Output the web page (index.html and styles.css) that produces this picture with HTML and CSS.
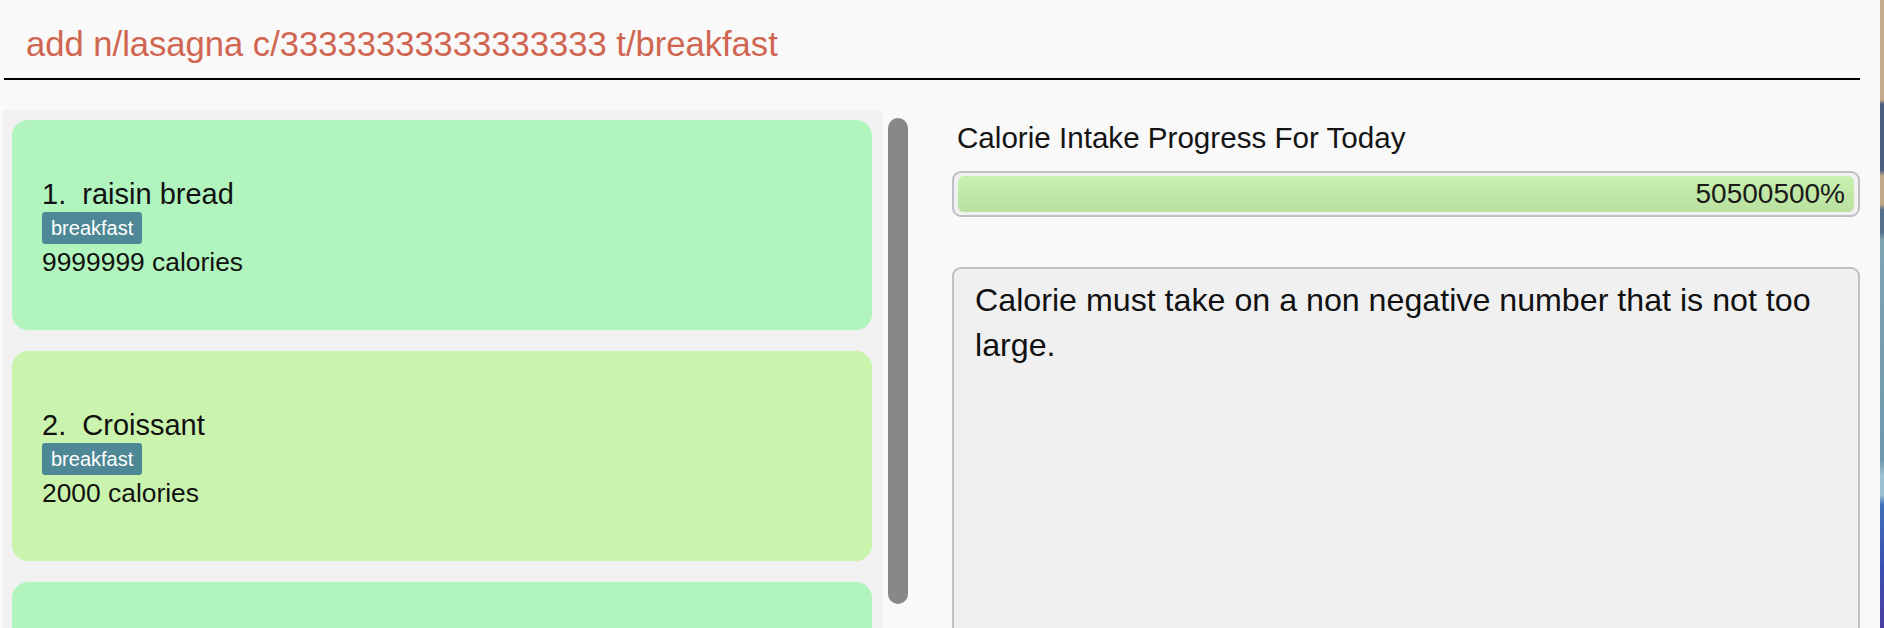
FILE: index.html
```html
<!DOCTYPE html>
<html lang="en">
<head>
<meta charset="utf-8">
<title>Calorie Tracker</title>
<link rel="stylesheet" href="styles.css">
</head>
<body>
<div class="app">
  <div class="window">
    <div class="command">add n/lasagna c/33333333333333333 t/breakfast</div>
    <div class="main">
      <div class="list-panel">
        <div class="card card-a">
          <div class="card-title">1.&nbsp; raisin bread</div>
          <span class="tag">breakfast</span>
          <div class="card-detail">9999999 calories</div>
        </div>
        <div class="card card-b">
          <div class="card-title">2.&nbsp; Croissant</div>
          <span class="tag">breakfast</span>
          <div class="card-detail">2000 calories</div>
        </div>
        <div class="card card-a"></div>
      </div>
      <div class="scrollbar"></div>
      <div class="side">
        <div class="side-title">Calorie Intake Progress For Today</div>
        <div class="progress">
          <div class="progress-bar">50500500%</div>
        </div>
        <div class="result">Calorie must take on a non negative number that is not too large.</div>
      </div>
    </div>
  </div>
  <div class="wallpaper"></div>
</div>
</body>
</html>
```
FILE: styles.css
```css
html, body {
  margin: 0;
  padding: 0;
}
body {
  width: 1884px;
  height: 628px;
  overflow: hidden;
  background: #f9f9f9;
  font-family: "Liberation Sans", Arial, sans-serif;
  color: #111;
}
.app {
  display: flex;
  height: 628px;
  overflow: hidden;
}
.window {
  width: 1880px;
  box-sizing: border-box;
  padding: 0 20px 0 3px;
  display: flex;
  flex-direction: column;
  background: #f9f9f9;
  overflow: hidden;
}
.command {
  flex: none;
  box-sizing: border-box;
  height: 80px;
  margin-left: 1px;
  padding: 24px 0 0 22px;
  border-bottom: 2px solid #000;
  font-size: 34.6px;
  line-height: 40px;
  color: #d06651;
  white-space: nowrap;
}
.main {
  flex: none;
  display: flex;
  align-items: flex-start;
  margin-top: 30px;
}
.list-panel {
  flex: none;
  width: 879px;
  height: 560px;
  box-sizing: border-box;
  padding: 10px 10px 0 9px;
  background: #f1f1f1;
  display: flex;
  flex-direction: column;
  gap: 21px;
  overflow: hidden;
}
.card {
  flex: none;
  height: 210px;
  box-sizing: border-box;
  border-radius: 16px;
  padding: 57px 0 0 30px;
  display: flex;
  flex-direction: column;
  align-items: flex-start;
}
.card-a { background: #b1f4bd; }
.card-b { background: #caf4ad; }
.card-title {
  font-size: 29px;
  line-height: 34px;
  white-space: pre;
}
.tag {
  margin-top: 1px;
  padding: 4px 9px;
  font-size: 20px;
  line-height: 24px;
  color: #fff;
  background: #4e8795;
  border-radius: 3px;
}
.card-detail {
  margin-top: 3px;
  font-size: 26.4px;
  line-height: 30px;
}
.scrollbar {
  flex: none;
  width: 20px;
  height: 486px;
  margin: 8px 0 0 6px;
  border-radius: 10px;
  background: #888888;
}
.side {
  flex: 1;
  margin-left: 44px;
  padding-top: 11px;
  display: flex;
  flex-direction: column;
}
.side-title {
  font-size: 29.6px;
  line-height: 34px;
  padding-left: 5px;
  color: #141414;
}
.progress {
  margin-top: 16px;
  height: 46px;
  box-sizing: border-box;
  border: 2px solid #bfbfc6;
  border-radius: 9px;
  background: #f1f1f1;
  padding: 3px 4px;
}
.progress-bar {
  height: 36px;
  box-sizing: border-box;
  border-radius: 6px;
  background: linear-gradient(#c8f0ae, #b9e0a0);
  text-align: right;
  padding-right: 9px;
  font-size: 28px;
  line-height: 36px;
  color: #1a1a1a;
}
.result {
  margin-top: 50px;
  height: 400px;
  box-sizing: border-box;
  border: 2px solid #bfbfc6;
  border-radius: 9px;
  background: #f0f0f0;
  padding: 9px 21px 0 21px;
  font-size: 32.2px;
  line-height: 45px;
  color: #111;
}
.wallpaper {
  flex: none;
  width: 4px;
  height: 628px;
  background: linear-gradient(180deg,
    #c6ab8b 0px, #c6ab8b 100px,
    #4d5f80 104px, #4d5f80 170px,
    #c2a888 176px, #c2a888 204px,
    #56708c 210px, #56708c 232px,
    #7ea4b2 240px, #6f98ad 460px,
    #9cc0cf 475px, #9cc0cf 495px,
    #3f6fb8 505px, #3a4fb0 570px, #4a3da0 628px);
}
```
